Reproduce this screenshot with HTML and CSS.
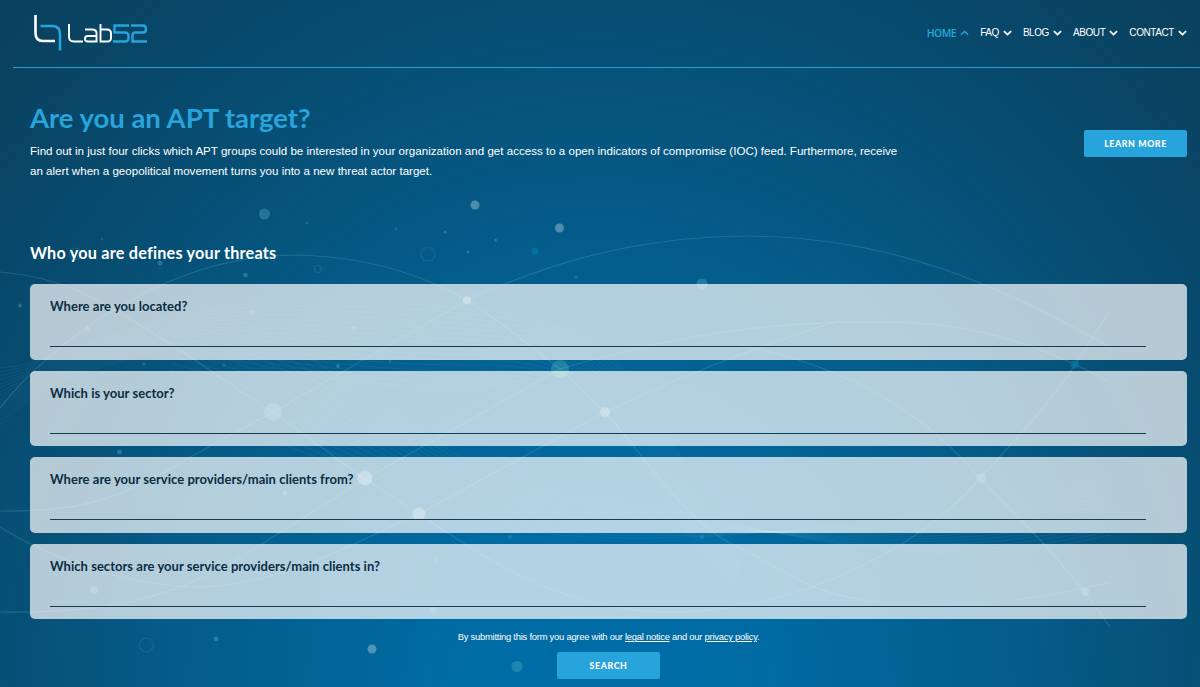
FILE: index.html
```html
<!DOCTYPE html>
<html lang="en">
<head>
<meta charset="utf-8">
<title>Lab52</title>
<link rel="stylesheet" href="styles.css">
</head>
<body>
<svg class="network" viewBox="0 0 1200 687" aria-hidden="true">
  <g class="lines">
    <path d="M0 272C65 277 105 303 140 325C190 355 235 388 273 412L365 479L419 514C475 550 550 608 660 612C800 616 930 540 980 478C1030 425 1055 395 1075 365L1110 310"/>
    <path d="M0 408C45 350 160 255 295 255C380 257 430 280 467 300C505 324 535 350 560 369L605 412C650 463 690 527 740 548L800 580C850 610 980 615 1110 582"/>
    <path d="M185 460L273 412L467 300C540 267 630 236 750 236C900 238 1000 287 1110 347"/>
    <path d="M0 612C100 614 180 600 260 545L365 479L560 369C700 328 790 321 900 322C980 325 1040 345 1110 382"/>
    <path d="M0 527C45 555 120 587 205 587C290 582 355 542 419 514L605 412C680 377 740 353 840 320"/>
    <path d="M0 511C80 512 120 500 185 460"/>
    <path d="M740 345C860 369 930 420 980 478L1045 545L1085 592L1110 627"/>
  </g>
  <g class="mesh" id="mesh"></g>
  <g class="pale">
    <circle cx="475" cy="205" r="4.5"/><circle cx="559.500" cy="228" r="4.500"/>
    <circle cx="467" cy="300.500" r="4"/><circle cx="605" cy="412" r="5"/>
    <circle cx="365" cy="478" r="7.500"/><circle cx="419" cy="514" r="6.500"/>
    <circle cx="372" cy="649" r="4.500"/>
  </g>
  <g class="teal">
    <circle cx="264.500" cy="214" r="5.500"/><circle cx="702" cy="284" r="5.500"/>
    <circle cx="273" cy="412" r="9"/>
    <circle cx="560" cy="369" r="9"/><circle cx="94" cy="590" r="4"/>
    <circle cx="517" cy="666.500" r="5.500"/><circle cx="981" cy="478" r="5"/>
    <circle cx="1085" cy="592" r="4"/><circle cx="245.500" cy="275" r="2.300"/>
    <circle cx="20" cy="305.500" r="2"/><circle cx="160" cy="263" r="2.500"/>
    <circle cx="119.500" cy="452" r="2.500"/><circle cx="338" cy="366" r="2"/>
    <circle cx="285" cy="493" r="2.500"/><circle cx="216" cy="639" r="2.500"/>
    <circle cx="445" cy="232" r="1.500"/><circle cx="495.500" cy="240" r="1.500"/>
    <circle cx="468" cy="252" r="1.500"/><circle cx="433" cy="610" r="3"/>
  </g>
  <g class="faint">
    <circle cx="307" cy="223" r="1.500"/>
    <circle cx="396" cy="229" r="1.500"/><circle cx="102" cy="239" r="1.500"/>
    <circle cx="576" cy="277" r="1.500"/><circle cx="510" cy="537" r="2"/>
    <circle cx="436" cy="560" r="2"/><circle cx="702" cy="537" r="2"/>
    <circle cx="144" cy="364" r="1.500"/><circle cx="224" cy="365" r="1.500"/>
    <circle cx="88" cy="329" r="2.500"/><circle cx="252" cy="312" r="2.500"/>
    <circle cx="353" cy="328" r="2"/><circle cx="390" cy="361" r="1.500"/>
  </g>
  <g class="bright"><circle cx="535" cy="251" r="3.500"/><circle cx="1075" cy="364.500" r="4"/></g>
  <g class="rings">
    <circle cx="428" cy="254" r="7"/><circle cx="146.500" cy="645" r="7"/>
    <circle cx="75" cy="254" r="6"/><circle cx="318" cy="269" r="3.500"/>
  </g>
</svg>
<div class="page">
  <header class="header">
    <svg class="logo" viewBox="0 0 120 44" role="img" aria-label="Lab52">
      <g class="logo-white">
        <path class="thick" d="M4.500 4V22Q4.500 30 12 30H24"/>
        <path d="M38 13V26Q38 30.500 43 30.500H52M54 18.500H61Q65.500 18.500 65.500 22V30.500H57Q54 30.500 54 28V27.500Q54 25 57 25H65M69.500 13V30.500H76Q80 30.500 80 27V22.500Q80 18.500 76 18.500H70"/>
      </g>
      <g class="logo-blue">
        <path class="thick" d="M9.500 15H22Q29 15.500 29 23V39.500"/>
        <path class="digits" d="M98 14.500H83.500V21.500H94Q97.500 21.500 97.500 25V27Q97.500 30.500 94 30.500H82M100 14.500H112Q115 14.500 115 18Q115 21.500 112 21.500H104Q101.500 21.500 101.500 25V30.500H116"/>
      </g>
    </svg>
    <nav class="nav">
      <a class="nav-item active">HOME<svg viewBox="0 0 10 6"><path d="M1 5L5 1.200L9 5"/></svg></a>
      <a class="nav-item">FAQ<svg viewBox="0 0 10 6"><path d="M1 1L5 4.800L9 1"/></svg></a>
      <a class="nav-item">BLOG<svg viewBox="0 0 10 6"><path d="M1 1L5 4.800L9 1"/></svg></a>
      <a class="nav-item">ABOUT<svg viewBox="0 0 10 6"><path d="M1 1L5 4.800L9 1"/></svg></a>
      <a class="nav-item">CONTACT<svg viewBox="0 0 10 6"><path d="M1 1L5 4.800L9 1"/></svg></a>
    </nav>
  </header>
  <main class="main">
    <section class="intro">
      <div class="intro-text">
        <h1>Are you an APT target?</h1>
        <p>Find out in just four clicks which APT groups could be interested in your organization and get access to a open indicators of compromise (IOC) feed. Furthermore, receive<br>an alert when a geopolitical movement turns you into a new threat actor target.</p>
      </div>
      <a class="button">LEARN MORE</a>
    </section>
    <h2>Who you are defines your threats</h2>
    <form class="form">
      <div class="card"><label>Where are you located?</label><div class="field"></div></div>
      <div class="card"><label>Which is your sector?</label><div class="field"></div></div>
      <div class="card"><label>Where are your service providers/main clients from?</label><div class="field"></div></div>
      <div class="card"><label>Which sectors are your service providers/main clients in?</label><div class="field"></div></div>
    </form>
    <p class="legal">By submitting this form you agree with our <a>legal notice</a> and our <a>privacy policy</a>.</p>
    <div class="actions"><a class="button">SEARCH</a></div>
  </main>
</div>
<script src="mesh.js"></script>
</body>
</html>
```
FILE: styles.css
```css
* { box-sizing: border-box; }
body {
  margin: 0;
  height: 687px;
  overflow: hidden;
  color: #fff;
  font-family: "Liberation Sans", Arial, sans-serif;
  background: radial-gradient(ellipse 900px 1000px at 600px 700px, #006da7 0%, #006ba3 18%, #055a86 50%, #074c70 72%, #0b3e5a 100%);
}
.network { position: absolute; left: 0; top: 0; width: 1200px; height: 687px; }
.lines { fill: none; stroke: #6cc3d6; stroke-opacity: .22; stroke-width: 1.2; }
.mesh { fill: none; stroke: #8fd0e0; stroke-opacity: .1; stroke-width: .7; }
.pale { fill: #b5d3df; fill-opacity: .42; }
.teal { fill: #5cb6c8; fill-opacity: .35; }
.faint { fill: #6cc3d6; fill-opacity: .2; }
.bright { fill: #0086b8; fill-opacity: .5; }
.rings { fill: none; stroke: #3c9abb; stroke-opacity: .25; stroke-width: 1.2; }

.page { position: relative; display: flex; flex-direction: column; }
.header {
  height: 68px;
  margin-left: 13px;
  padding: 0 13px 0 18px;
  display: flex;
  justify-content: space-between;
  border-bottom: 1px solid #279fd5;
}
.logo { width: 120px; height: 44px; margin-top: 11px; fill: none; stroke-width: 1.9; }
.logo-white { stroke: #fff; }
.logo-blue { stroke: #27a4dc; }
.thick { stroke-width: 2.6; }
.digits { stroke-width: 2.4; }
.nav { display: flex; gap: 11px; height: 66px; align-items: center; }
.nav-item { display: flex; align-items: center; gap: 4px; font-size: 10px; line-height: 12px; letter-spacing: -.42px; white-space: nowrap; }
.nav-item svg { width: 9px; height: 6px; fill: none; stroke: #fff; stroke-width: 2; }
.active { color: #27a4dc; font: 600 10.4px/12px "Open Sans", sans-serif; letter-spacing: -.5px; }
.active svg { stroke: #27a4dc; stroke-width: 1.6; }

.main { padding: 0 13px 0 30px; }
.intro { display: flex; justify-content: space-between; padding-top: 32px; }
h1, h2, label { font-family: Lato, "Open Sans", sans-serif; font-weight: 700; margin: 0; white-space: nowrap; }
h1 { font-size: 27.5px; line-height: 36px; height: 41px; color: #27a4dc; letter-spacing: -.03px; }
.intro p { margin: 0; font-size: 11.58px; line-height: 20px; white-space: nowrap; }
.button {
  display: flex;
  align-items: center;
  justify-content: center;
  width: 103px;
  height: 27px;
  border-radius: 2px;
  background: #27a4dc;
  font: 900 8.8px/12px Lato, sans-serif;
  letter-spacing: .6px;
}
.intro .button { margin-top: 30px; }
h2 { margin-top: 60px; font-size: 16.2px; line-height: 23px; height: 43px; letter-spacing: .22px; }
.form { display: flex; flex-direction: column; gap: 11px; }
.card {
  height: 75.6px;
  padding: 14px 41px 12.6px 20px;
  border-radius: 5px;
  background: rgba(255, 255, 255, .7);
  display: flex;
  flex-direction: column;
  justify-content: space-between;
}
label { color: #0b2d43; font-size: 13px; line-height: 17px; letter-spacing: .03px; }
.field { border-bottom: 1px solid #173a50; height: 20px; }
.legal { margin: 12px 0 0; text-align: center; font-size: 9.4px; line-height: 12px; letter-spacing: -.23px; }
.legal a { text-decoration: underline; }
.actions { display: flex; justify-content: center; padding-top: 9px; }
```
FILE: mesh.js
```js
// Fans of fine strands woven between the network curves.
const mesh = document.getElementById('mesh');
let strands = '';
for (let i = 0; i < 16; i++) {
  strands += `<path d="M0 ${368 + i * 4}C40 ${365 + i} 80 ${345 + i * 2} 140 ${325 + i * 2}S300 ${290 + i * 7} 480 ${310 + i * 5}S650 ${430 + i * 7} 740 ${560 + i * 2}"/>`;
  strands += `<path d="M170 ${300 + i * 7}C330 ${330 + i * 8} 430 ${480 + i * 3} 560 ${490 + i * 3}S880 ${590 - i * 4} 1110 ${535 - i * 4}"/>`;
}
mesh.innerHTML = strands;
```
